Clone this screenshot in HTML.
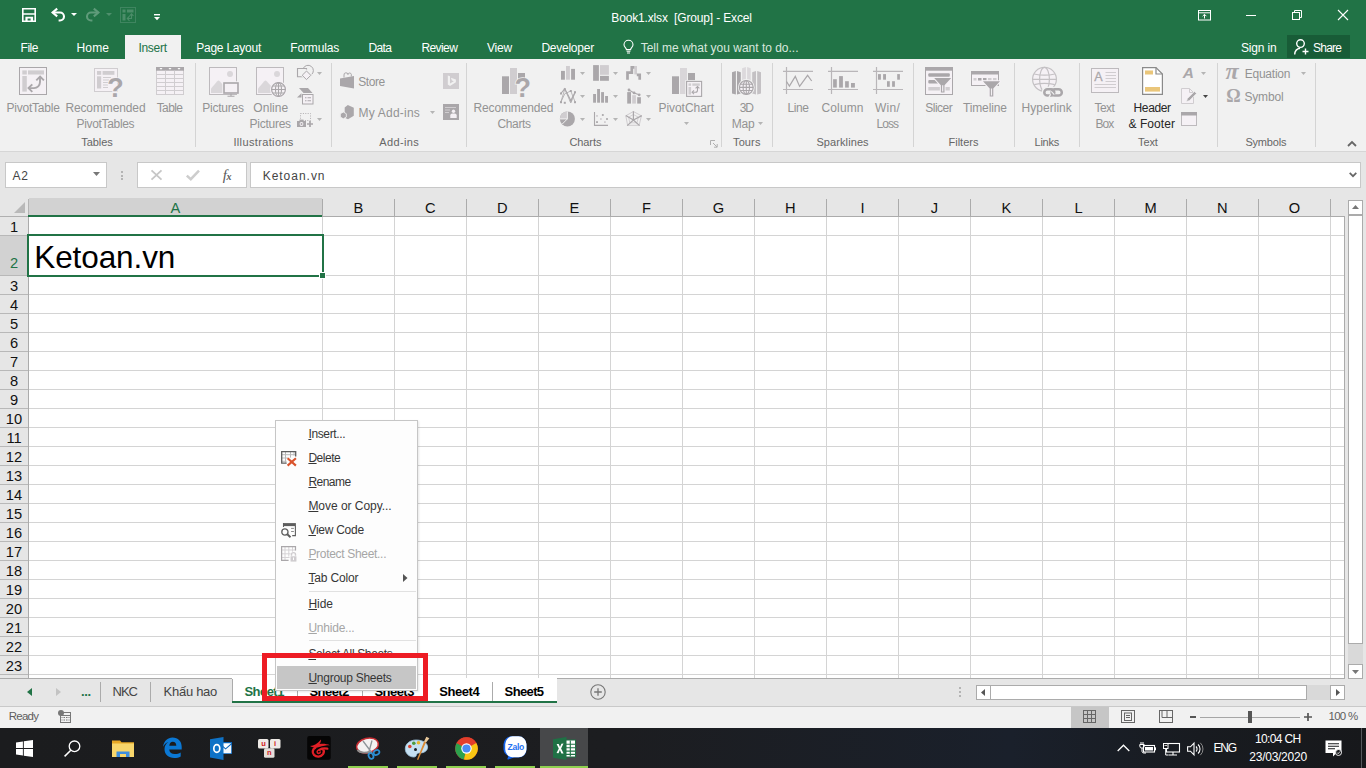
<!DOCTYPE html>
<html>
<head>
<meta charset="utf-8">
<title>Book1.xlsx [Group] - Excel</title>
<style>
*{box-sizing:border-box;margin:0;padding:0}
html,body{width:1366px;height:768px;overflow:hidden;background:#e6e6e6;font-family:"Liberation Sans",sans-serif;font-size:12px;color:#444}
#app{position:relative;width:1366px;height:768px;overflow:hidden}
.a{position:absolute}
.tx{position:absolute;white-space:nowrap;line-height:1}
svg{position:absolute;overflow:visible}
u{text-decoration:underline;text-underline-offset:1px}
</style>
</head>
<body>
<div id="app">
<div class="a" style="left:0;top:0;width:1366px;height:59px;background:#217346"></div>
<div class="a" style="left:0;top:59px;width:1366px;height:92px;background:#f1f1f1"></div>
<div class="a" style="left:0;top:151px;width:1366px;height:1px;background:#d6d6d6"></div>
<div class="a" style="left:125px;top:35px;width:56px;height:25px;background:#f1f1f1"></div>
<div class="a" style="left:1287px;top:35px;width:63px;height:23px;background:#185c37"></div>
<span class="tx" style="left:20.50px;top:41.84px;font-size:12px;color:#ffffff;letter-spacing:-0.450px;">File</span>
<span class="tx" style="left:76.40px;top:41.84px;font-size:12px;color:#ffffff;letter-spacing:0.200px;">Home</span>
<span class="tx" style="left:138.40px;top:41.84px;font-size:12px;color:#217346;letter-spacing:-0.280px;">Insert</span>
<span class="tx" style="left:196.20px;top:41.84px;font-size:12px;color:#ffffff;letter-spacing:-0.230px;">Page Layout</span>
<span class="tx" style="left:290.30px;top:41.84px;font-size:12px;color:#ffffff;letter-spacing:-0.143px;">Formulas</span>
<span class="tx" style="left:368.40px;top:41.84px;font-size:12px;color:#ffffff;letter-spacing:-0.633px;">Data</span>
<span class="tx" style="left:421.40px;top:41.84px;font-size:12px;color:#ffffff;letter-spacing:-0.580px;">Review</span>
<span class="tx" style="left:486.90px;top:41.84px;font-size:12px;color:#ffffff;letter-spacing:-0.200px;">View</span>
<span class="tx" style="left:541.40px;top:41.84px;font-size:12px;color:#ffffff;letter-spacing:-0.244px;">Developer</span>
<span class="tx" style="left:640.70px;top:41.84px;font-size:12px;color:#d9e8df;letter-spacing:-0.009px;">Tell me what you want to do...</span>
<span class="tx" style="left:1241.00px;top:41.84px;font-size:12px;color:#ffffff;letter-spacing:-0.175px;">Sign in</span>
<span class="tx" style="left:1313.00px;top:41.84px;font-size:12px;color:#ffffff;letter-spacing:-0.750px;">Share</span>
<span class="tx" style="left:611.30px;top:12.14px;font-size:12px;color:#ffffff;letter-spacing:-0.156px;white-space:pre;">Book1.xlsx  [Group] - Excel</span>
<svg style="left:22px;top:8px" width="14" height="14" viewBox="0 0 14 14"><path d="M0.800 0.800h12.400v12.400h-12.400z" fill="none" stroke="#fff" stroke-width="1.600"/><path d="M1 6h12" stroke="#fff" stroke-width="1.500"/><path d="M3.400 13.200V8.800h7.700v4.400h-2.500v-2.600H5.600v2.600z" fill="#fff"/></svg>
<svg style="left:50px;top:7px" width="16" height="15" viewBox="0 0 16 15"><path d="M7.200 1.600L2.600 5.500l4.600 3.900" fill="none" stroke="#fff" stroke-width="2.100"/><path d="M2.600 5.500h7.400a4 4 0 0 1 0 8H8.600" fill="none" stroke="#fff" stroke-width="2.100"/></svg>
<svg style="left:71px;top:13px" width="6" height="3" viewBox="0 0 6 3"><path d="M0 0h6L3 3z" fill="#fff"/></svg>
<svg style="left:85px;top:7px" width="16" height="15" viewBox="0 0 16 15"><path d="M8.800 1.600l4.600 3.900-4.600 3.900" fill="none" stroke="#5f9b7a" stroke-width="2.100"/><path d="M13.400 5.500H6a4 4 0 0 0 0 8h1.400" fill="none" stroke="#5f9b7a" stroke-width="2.100"/></svg>
<svg style="left:106px;top:13px" width="6" height="3" viewBox="0 0 6 3"><path d="M0 0h6L3 3z" fill="#4f8f6c"/></svg>
<svg style="left:120px;top:7px" width="16" height="16" viewBox="0 0 16 16"><rect x=".5" y=".5" width="15" height="15" fill="none" stroke="#3f8560"/><rect x="2.5" y="2.5" width="3" height="3" fill="#4b8d69"/><rect x="7" y="2.5" width="6.5" height="3" fill="#4b8d69"/><rect x="2.5" y="7" width="3" height="6.5" fill="#4b8d69"/><path d="M11.5 7v4.5H7.5M9.5 9.2l-2.2 2.3 2.2 2.3M9.6 8.8l1.9-2 1.9 2" fill="none" stroke="#4b8d69" stroke-width="1.1"/></svg>
<svg style="left:153.500px;top:14px" width="6" height="7" viewBox="0 0 6 7"><rect x="0" y="0" width="6" height="1.400" fill="#fff"/><path d="M0 3h6L3 6.200z" fill="#fff"/></svg>
<svg style="left:623px;top:40px" width="11" height="14" viewBox="0 0 11 14"><path d="M3.4 9.6C3.4 8 1 7.2 1 4.8a4.5 4.5 0 0 1 9 0c0 2.4-2.4 3.2-2.4 4.8z" fill="none" stroke="#fff" stroke-width="1.1"/><path d="M3.6 11.3h3.8M4 13h3" stroke="#fff" stroke-width="1.1"/></svg>
<svg style="left:1198px;top:10px" width="13" height="11" viewBox="0 0 13 11"><rect x=".5" y=".5" width="12" height="9.5" fill="none" stroke="#fff"/><path d="M.5 2.8h12" stroke="#fff"/><path d="M6.5 8.5V4.4M4.6 6.2l1.9-1.9 1.9 1.9" fill="none" stroke="#fff"/></svg>
<div class="a" style="left:1246px;top:15px;width:10px;height:1px;background:#fff"></div>
<svg style="left:1292px;top:10px" width="10" height="10" viewBox="0 0 10 10"><rect x=".5" y="2.5" width="7" height="7" fill="none" stroke="#fff"/><path d="M2.5 2.5v-2h7v7h-2" fill="none" stroke="#fff"/></svg>
<svg style="left:1338px;top:10px" width="10" height="10" viewBox="0 0 10 10"><path d="M0 0l10 10M10 0L0 10" stroke="#fff" stroke-width="1.1"/></svg>
<svg style="left:1294px;top:39px" width="15" height="16" viewBox="0 0 15 16"><circle cx="6.5" cy="4.6" r="3.8" fill="none" stroke="#fff" stroke-width="1.400"/><path d="M.7 15.5c.2-3.6 2.4-6 5.4-6.3" fill="none" stroke="#fff" stroke-width="1.400"/><path d="M11.5 9.5v6M8.5 12.5h6" stroke="#fff" stroke-width="1.400"/></svg>
<div class="a" style="left:195px;top:63px;width:1px;height:84px;background:#d4d4d4"></div>
<div class="a" style="left:331px;top:63px;width:1px;height:84px;background:#d4d4d4"></div>
<div class="a" style="left:466px;top:63px;width:1px;height:84px;background:#d4d4d4"></div>
<div class="a" style="left:721px;top:63px;width:1px;height:84px;background:#d4d4d4"></div>
<div class="a" style="left:772px;top:63px;width:1px;height:84px;background:#d4d4d4"></div>
<div class="a" style="left:913px;top:63px;width:1px;height:84px;background:#d4d4d4"></div>
<div class="a" style="left:1014px;top:63px;width:1px;height:84px;background:#d4d4d4"></div>
<div class="a" style="left:1079px;top:63px;width:1px;height:84px;background:#d4d4d4"></div>
<div class="a" style="left:1217px;top:63px;width:1px;height:84px;background:#d4d4d4"></div>
<div class="a" style="left:1315px;top:63px;width:1px;height:84px;background:#d4d4d4"></div>
<span class="tx" style="left:6.60px;top:101.84px;font-size:12px;color:#939393;letter-spacing:-0.233px;">PivotTable</span>
<span class="tx" style="left:65.40px;top:101.84px;font-size:12px;color:#939393;letter-spacing:-0.120px;">Recommended</span>
<span class="tx" style="left:76.60px;top:117.84px;font-size:12px;color:#939393;letter-spacing:-0.340px;">PivotTables</span>
<span class="tx" style="left:156.70px;top:101.84px;font-size:12px;color:#939393;letter-spacing:-0.612px;">Table</span>
<span class="tx" style="left:202.30px;top:101.84px;font-size:12px;color:#939393;letter-spacing:-0.250px;">Pictures</span>
<span class="tx" style="left:253.30px;top:101.84px;font-size:12px;color:#939393;letter-spacing:0.050px;">Online</span>
<span class="tx" style="left:249.50px;top:117.84px;font-size:12px;color:#939393;letter-spacing:-0.250px;">Pictures</span>
<span class="tx" style="left:358.30px;top:75.84px;font-size:12px;color:#939393;letter-spacing:-0.463px;">Store</span>
<span class="tx" style="left:358.50px;top:106.84px;font-size:12px;color:#939393;letter-spacing:0.217px;">My Add-ins</span>
<span class="tx" style="left:473.50px;top:101.84px;font-size:12px;color:#939393;letter-spacing:-0.140px;">Recommended</span>
<span class="tx" style="left:497.50px;top:117.84px;font-size:12px;color:#939393;letter-spacing:-0.370px;">Charts</span>
<span class="tx" style="left:658.50px;top:101.84px;font-size:12px;color:#939393;letter-spacing:-0.056px;">PivotChart</span>
<span class="tx" style="left:739.70px;top:101.84px;font-size:12px;color:#939393;letter-spacing:-1.200px;">3D</span>
<span class="tx" style="left:731.70px;top:117.84px;font-size:12px;color:#939393;letter-spacing:-0.125px;">Map</span>
<span class="tx" style="left:787.60px;top:101.84px;font-size:12px;color:#939393;letter-spacing:-0.450px;">Line</span>
<span class="tx" style="left:821.50px;top:101.84px;font-size:12px;color:#939393;letter-spacing:0.130px;">Column</span>
<span class="tx" style="left:875.00px;top:101.84px;font-size:12px;color:#939393;letter-spacing:0.250px;">Win/</span>
<span class="tx" style="left:876.60px;top:117.84px;font-size:12px;color:#939393;letter-spacing:-1.017px;">Loss</span>
<span class="tx" style="left:925.20px;top:101.84px;font-size:12px;color:#939393;letter-spacing:-0.480px;">Slicer</span>
<span class="tx" style="left:963.00px;top:101.84px;font-size:12px;color:#939393;letter-spacing:-0.143px;">Timeline</span>
<span class="tx" style="left:1021.60px;top:101.84px;font-size:12px;color:#939393;letter-spacing:0.019px;">Hyperlink</span>
<span class="tx" style="left:1094.50px;top:101.84px;font-size:12px;color:#939393;letter-spacing:-0.567px;">Text</span>
<span class="tx" style="left:1095.50px;top:117.84px;font-size:12px;color:#939393;letter-spacing:-1.025px;">Box</span>
<span class="tx" style="left:1133.60px;top:101.84px;font-size:12px;color:#262626;letter-spacing:-0.390px;">Header</span>
<span class="tx" style="left:1128.40px;top:117.84px;font-size:12px;color:#262626;letter-spacing:0.086px;">&amp; Footer</span>
<span class="tx" style="left:1244.70px;top:67.84px;font-size:12px;color:#939393;letter-spacing:-0.229px;">Equation</span>
<span class="tx" style="left:1244.40px;top:90.84px;font-size:12px;color:#939393;letter-spacing:-0.140px;">Symbol</span>
<span class="tx" style="left:81.30px;top:137.29px;font-size:11px;color:#666;letter-spacing:-0.070px;">Tables</span>
<span class="tx" style="left:233.40px;top:137.29px;font-size:11px;color:#666;letter-spacing:0.362px;">Illustrations</span>
<span class="tx" style="left:379.30px;top:137.29px;font-size:11px;color:#666;letter-spacing:0.342px;">Add-ins</span>
<span class="tx" style="left:569.40px;top:137.29px;font-size:11px;color:#666;letter-spacing:-0.080px;">Charts</span>
<span class="tx" style="left:733.00px;top:137.29px;font-size:11px;color:#666;letter-spacing:0.125px;">Tours</span>
<span class="tx" style="left:816.40px;top:137.29px;font-size:11px;color:#666;letter-spacing:0.094px;">Sparklines</span>
<span class="tx" style="left:948.50px;top:137.29px;font-size:11px;color:#666;">Filters</span>
<span class="tx" style="left:1034.50px;top:137.29px;font-size:11px;color:#666;letter-spacing:-0.238px;">Links</span>
<span class="tx" style="left:1138.00px;top:137.29px;font-size:11px;color:#666;letter-spacing:-0.083px;">Text</span>
<span class="tx" style="left:1245.40px;top:137.29px;font-size:11px;color:#666;letter-spacing:-0.192px;">Symbols</span>
<svg style="left:317px;top:72px" width="5" height="3" viewBox="0 0 5 3"><path d="M0 0h5L2.5 3z" fill="#b5b5b5"/></svg>
<svg style="left:317px;top:118px" width="5" height="3" viewBox="0 0 5 3"><path d="M0 0h5L2.5 3z" fill="#b5b5b5"/></svg>
<svg style="left:430px;top:110.8px" width="5" height="3" viewBox="0 0 5 3"><path d="M0 0h5L2.5 3z" fill="#b5b5b5"/></svg>
<svg style="left:580px;top:72px" width="5" height="3" viewBox="0 0 5 3"><path d="M0 0h5L2.5 3z" fill="#b5b5b5"/></svg>
<svg style="left:613px;top:72px" width="5" height="3" viewBox="0 0 5 3"><path d="M0 0h5L2.5 3z" fill="#b5b5b5"/></svg>
<svg style="left:646px;top:72px" width="5" height="3" viewBox="0 0 5 3"><path d="M0 0h5L2.5 3z" fill="#b5b5b5"/></svg>
<svg style="left:580px;top:95px" width="5" height="3" viewBox="0 0 5 3"><path d="M0 0h5L2.5 3z" fill="#b5b5b5"/></svg>
<svg style="left:613px;top:95px" width="5" height="3" viewBox="0 0 5 3"><path d="M0 0h5L2.5 3z" fill="#b5b5b5"/></svg>
<svg style="left:646px;top:95px" width="5" height="3" viewBox="0 0 5 3"><path d="M0 0h5L2.5 3z" fill="#b5b5b5"/></svg>
<svg style="left:580px;top:118px" width="5" height="3" viewBox="0 0 5 3"><path d="M0 0h5L2.5 3z" fill="#b5b5b5"/></svg>
<svg style="left:613px;top:118px" width="5" height="3" viewBox="0 0 5 3"><path d="M0 0h5L2.5 3z" fill="#b5b5b5"/></svg>
<svg style="left:646px;top:118px" width="5" height="3" viewBox="0 0 5 3"><path d="M0 0h5L2.5 3z" fill="#b5b5b5"/></svg>
<svg style="left:684px;top:122px" width="5" height="3" viewBox="0 0 5 3"><path d="M0 0h5L2.5 3z" fill="#b5b5b5"/></svg>
<svg style="left:758px;top:122px" width="5" height="3" viewBox="0 0 5 3"><path d="M0 0h5L2.5 3z" fill="#b5b5b5"/></svg>
<svg style="left:1201px;top:72px" width="5" height="3" viewBox="0 0 5 3"><path d="M0 0h5L2.5 3z" fill="#b5b5b5"/></svg>
<svg style="left:1203px;top:95px" width="5" height="3" viewBox="0 0 5 3"><path d="M0 0h5L2.5 3z" fill="#444"/></svg>
<svg style="left:1300.5px;top:72px" width="5" height="3" viewBox="0 0 5 3"><path d="M0 0h5L2.5 3z" fill="#b5b5b5"/></svg>
<svg style="left:710px;top:140px" width="8" height="8" viewBox="0 0 8 8"><path d="M.5 5V.5H5" fill="none" stroke="#b0b0b0"/><path d="M3 3l4 4M7.2 4v3.2H4" fill="none" stroke="#b0b0b0"/></svg>
<svg style="left:1347px;top:140px" width="10" height="7" viewBox="0 0 10 7"><path d="M1 6l4-4 4 4" fill="none" stroke="#666" stroke-width="1.8"/></svg>
<svg style="left:19px;top:67px" width="28" height="28" viewBox="0 0 28 28"><rect x=".5" y=".5" width="27" height="27" fill="#f5f1f5" stroke="#aaa7aa"/><rect x="3.3" y="3.4" width="4.5" height="4.1" fill="#d0cdd0"/><rect x="9" y="3.4" width="16" height="4.1" fill="#d0cdd0"/><rect x="3.3" y="9" width="4.5" height="15.6" fill="#d0cdd0"/><path d="M9.800 21.100h5.200a6 6 0 0 0 6-6V10" fill="none" stroke="#aaa7aa" stroke-width="1.900"/><path d="M13.300 17.300l-3.800 3.800 3.800 3.800" fill="none" stroke="#aaa7aa" stroke-width="1.900"/><path d="M17.300 13.400l3.800-3.800 3.800 3.800" fill="none" stroke="#aaa7aa" stroke-width="1.900"/></svg>
<svg style="left:94px;top:68px" width="28" height="29" viewBox="0 0 28 29"><rect x=".5" y=".5" width="23" height="23" fill="#f5f1f5" stroke="#d0cdd0"/><rect x="3" y="3" width="4.200" height="3.800" fill="#d0cdd0"/><rect x="8.600" y="3" width="11.800" height="3.800" fill="#d0cdd0"/><rect x="3" y="8.300" width="4.200" height="12.200" fill="#d0cdd0"/><path d="M9 9.500h8M9 12h6M9 14.500h6M9 17h5M9 19.500h5" stroke="#d0cdd0" stroke-width="1"/><text x="13.200" y="28.700" font-family="Liberation Sans, sans-serif" font-weight="bold" font-size="27" fill="#aaa7aa" stroke="#f5f1f5" stroke-width="1.600" paint-order="stroke">?</text></svg>
<svg style="left:156px;top:67px" width="28" height="28" viewBox="0 0 28 28"><rect x=".5" y=".5" width="27" height="27" fill="#f5f1f5" stroke="#d0cdd0"/><rect x="0" y="0" width="28" height="3.700" fill="#aaa7aa"/><path d="M0 7.5h28" stroke="#d0cdd0" stroke-width="1"/><path d="M0 11.5h28" stroke="#d0cdd0" stroke-width="1"/><path d="M0 15.5h28" stroke="#d0cdd0" stroke-width="1"/><path d="M0 19.5h28" stroke="#d0cdd0" stroke-width="1"/><path d="M0 23.5h28" stroke="#d0cdd0" stroke-width="1"/><path d="M9.5 3.700v24" stroke="#d0cdd0" stroke-width="1"/><path d="M18.5 3.700v24" stroke="#d0cdd0" stroke-width="1"/><path d="M3.5 1h3l-1.500 1.800z" fill="#fff"/><path d="M12.5 1h3l-1.500 1.800z" fill="#fff"/><path d="M21.5 1h3l-1.500 1.800z" fill="#fff"/></svg>
<svg style="left:209px;top:67px" width="31" height="31" viewBox="0 0 31 31"><rect x=".5" y=".5" width="27" height="27" fill="#f5f1f5" stroke="#bdbabd"/><circle cx="21" cy="7" r="3" fill="#dad7da"/><path d="M2 26V21.500l6.300-7.300q1.200-1.200 2.400 0l6.800 7.300V26z" fill="#dad7da"/><rect x="13.300" y="14.300" width="17" height="12.700" fill="#f5f1f5"/><rect x="15" y="16" width="14" height="10" fill="#f5f1f5" stroke="#aaa7aa" stroke-width="1.600"/><path d="M22 26.800v2M18.500 29.300h7" stroke="#aaa7aa" stroke-width="1.100"/></svg>
<svg style="left:256px;top:67px" width="31" height="31" viewBox="0 0 31 31"><rect x=".5" y=".5" width="27" height="27" fill="#f5f1f5" stroke="#bdbabd"/><circle cx="21" cy="7" r="3" fill="#dad7da"/><path d="M2 26V21.500l6.300-7.300q1.200-1.200 2.400 0l6.800 7.300V26z" fill="#dad7da"/><circle cx="22.500" cy="22.500" r="7.500" fill="#f5f1f5" stroke="#f5f1f5" stroke-width="2"/><circle cx="22.500" cy="22.500" r="6.900" fill="#f5f1f5" stroke="#aaa7aa" stroke-width="1.200"/><ellipse cx="22.500" cy="22.500" rx="3" ry="6.900" fill="none" stroke="#aaa7aa" stroke-width="1.100"/><path d="M15.600 22.500h13.800M16.600 19h11.800M16.600 26h11.800M22.500 15.600v13.800" stroke="#aaa7aa" stroke-width="1.100"/></svg>
<svg style="left:297px;top:65px" width="17" height="16" viewBox="0 0 17 16"><path d="M6.200 3.500A5.300 5.300 0 1 1 14.300 9.800" fill="none" stroke="#aaa7aa" stroke-width="1"/><path d="M6.500 11.700H.5V3.500H9.500V6" fill="none" stroke="#aaa7aa" stroke-width="1.100"/><path d="M9.500 6l4.300 4.300-4.300 4.300-4.300-4.300z" fill="#f1f1f1" stroke="#f1f1f1" stroke-width="2.400"/><path d="M9.500 6l4.300 4.300-4.300 4.300-4.300-4.300z" fill="#f5f1f5" stroke="#aaa7aa" stroke-width="1"/></svg>
<svg style="left:297px;top:88px" width="17" height="17" viewBox="0 0 17 17"><path d="M2 0h9l4.500 5H6.500z" fill="#aaa7aa"/><path d="M0 9.500l4.500-4.300V9.500z" fill="#aaa7aa"/><rect x="5.500" y="6.500" width="10.500" height="9.500" fill="#f5f1f5" stroke="#aaa7aa"/><path d="M8 9.800h1.500M10.500 9.800h3.500M8 12.800h1.500M10.500 12.800h3.500" stroke="#aaa7aa" stroke-width="1.100"/></svg>
<svg style="left:297px;top:113px" width="17" height="14" viewBox="0 0 17 14"><rect x="3.500" y=".5" width="10" height="7" fill="none" stroke="#aaa7aa" stroke-width=".9" stroke-dasharray="1 1.400"/><rect x="0" y="8" width="9" height="6" fill="#aaa7aa"/><rect x="2.500" y="6.600" width="4" height="2" fill="#aaa7aa"/><circle cx="4.500" cy="11" r="1.900" fill="#f5f1f5"/><circle cx="4.500" cy="11" r="1" fill="#aaa7aa"/><path d="M13 8v6M10 11h6" stroke="#aaa7aa" stroke-width="1.700"/></svg>
<svg style="left:340px;top:72px" width="15" height="17" viewBox="0 0 15 17"><path d="M0 6.500l14-2.500V16.500L0 14z" fill="#aaa7aa"/><path d="M4 5.500V3a2 2 0 0 1 4-.4V2.300a1.700 1.700 0 0 1 3.300 0V4.500" fill="none" stroke="#aaa7aa" stroke-width="1"/></svg>
<svg style="left:340px;top:105px" width="15" height="15" viewBox="0 0 15 15"><path d="M7.800 0l6 2.700v8.100L8 14.200l-3.300-1.500V2.500z" fill="#aaa7aa"/><path d="M3.300 7l3 1.700v3.400l-3 1.700-3-1.700V8.700z" fill="#aaa7aa" stroke="#f1f1f1" stroke-width=".9"/></svg>
<svg style="left:443px;top:73px" width="16" height="16" viewBox="0 0 16 16"><rect width="16" height="16" fill="#d0cdd0"/><path d="M4.800 2.500l2.200.8v7.200l3.800-2.200-1.900-.9-1-2.600 5 1.800v2.600L7 12.900l-2.200-1.300z" fill="#f1f1f1"/></svg>
<svg style="left:443px;top:104px" width="16" height="16" viewBox="0 0 16 16"><rect width="16" height="16" fill="#aaa7aa"/><path d="M2 3.500h11M2 6h5M2 8.500h4" stroke="#d0cdd0" stroke-width="1.100"/><circle cx="10.500" cy="7.200" r="1.700" fill="#f5f1f5"/><path d="M7.300 14v-2.500a2 2 0 0 1 2-2h2.400a2 2 0 0 1 2 2V14z" fill="#f5f1f5"/></svg>
<svg style="left:502px;top:68px" width="28" height="29" viewBox="0 0 28 29"><rect x="0" y="8.300" width="7" height="17.700" fill="#aaa7aa"/><rect x="8" y="0" width="7" height="26" fill="#d0cdd0"/><rect x="16" y="5" width="7" height="6" fill="#aaa7aa"/><text x="12.600" y="28.700" font-family="Liberation Sans, sans-serif" font-weight="bold" font-size="27" fill="#aaa7aa" stroke="#f1f1f1" stroke-width="1.600" paint-order="stroke">?</text></svg>
<svg style="left:560px;top:65px" width="16" height="16" viewBox="0 0 16 16"><rect x="1" y="5.900" width="3.900" height="8.800" fill="#aaa7aa"/><rect x="6" y="1" width="3.900" height="13.700" fill="#d0cdd0"/><rect x="11.100" y="3.900" width="3.900" height="10.800" fill="#aaa7aa"/></svg>
<svg style="left:593px;top:65px" width="16" height="16" viewBox="0 0 16 16"><rect x=".1" y=".1" width="5.800" height="15.700" fill="#aaa7aa"/><rect x="7" y=".1" width="8.900" height="9.700" fill="#d0cdd0"/><rect x="7" y="10.900" width="8.900" height="4.900" fill="#aaa7aa"/></svg>
<svg style="left:626px;top:65px" width="16" height="16" viewBox="0 0 16 16"><path d="M1.500 14.800V7.600H5.800V2.400H8.800" fill="none" stroke="#aaa7aa" stroke-width="2.700"/><rect x="8.300" y="1" width="2.700" height="8.400" fill="#d0cdd0"/><path d="M10.800 9.800h2.900v5" fill="none" stroke="#aaa7aa" stroke-width="2.700"/></svg>
<svg style="left:560px;top:88px" width="16" height="16" viewBox="0 0 16 16"><path d="M.8 5.500L4.800 .8l6 11.700 4.400-8.500" fill="none" stroke="#aaa7aa" stroke-width="1.100"/><path d="M.8 14.200L4.800 1l6 14 4.400-10.500" fill="none" stroke="#aaa7aa" stroke-width="1" opacity=".8"/><path d="M.8 14.200l4-8.500L10.800 3l4.400 11.200" fill="none" stroke="#aaa7aa" stroke-width="1" opacity=".8"/><rect x="0" y="4.5" width="2" height="2" fill="#aaa7aa"/><rect x="3.8" y="0.19999999999999996" width="2" height="2" fill="#aaa7aa"/><rect x="9.8" y="2" width="2" height="2" fill="#aaa7aa"/><rect x="14" y="3.2" width="2" height="2" fill="#aaa7aa"/><rect x="0" y="13.2" width="2" height="2" fill="#aaa7aa"/><rect x="3.8" y="13.8" width="2" height="2" fill="#aaa7aa"/><rect x="9.8" y="11.5" width="2" height="2" fill="#aaa7aa"/><rect x="14" y="13.2" width="2" height="2" fill="#aaa7aa"/></svg>
<svg style="left:593px;top:88px" width="16" height="16" viewBox="0 0 16 16"><rect x=".1" y="6" width="2.900" height="8.700" fill="#aaa7aa"/><rect x="4.100" y="1" width="2.900" height="13.700" fill="#aaa7aa"/><rect x="8.100" y="4.100" width="2.900" height="10.600" fill="#aaa7aa"/><rect x="12.100" y="8" width="2.900" height="6.700" fill="#aaa7aa"/></svg>
<svg style="left:626px;top:88px" width="16" height="16" viewBox="0 0 16 16"><rect x="1.200" y="4.100" width="3.800" height="11.500" fill="#aaa7aa"/><rect x="6.200" y="7.200" width="3.700" height="8.400" fill="#d0cdd0"/><rect x="11.200" y="9.200" width="3.700" height="6.400" fill="#aaa7aa"/><path d="M3 2l5.100 2.900 5.100 1.900" fill="none" stroke="#aaa7aa" stroke-width="1.100"/><circle cx="3" cy="2" r="1.400" fill="#aaa7aa"/><circle cx="8.100" cy="4.900" r="1.400" fill="#aaa7aa"/><circle cx="13.200" cy="6.800" r="1.400" fill="#aaa7aa"/></svg>
<svg style="left:560px;top:111px" width="16" height="16" viewBox="0 0 16 16"><circle cx="7.400" cy="7.900" r="7.500" fill="#aaa7aa"/><path d="M7.400 7.900V.4A7.500 7.500 0 0 0 -.1 7.900z" fill="#d0cdd0"/><path d="M7.400 .4V7.900H-.1M7.400 7.900l-5.300 5.300" fill="none" stroke="#f1f1f1" stroke-width="1"/></svg>
<svg style="left:593px;top:111px" width="16" height="16" viewBox="0 0 16 16"><path d="M1.500 1v13.400H15" fill="none" stroke="#aaa7aa" stroke-width="1.100"/><rect x="8.9" y="3.1" width="1.800" height="1.800" fill="#aaa7aa"/><rect x="13.1" y="7.1" width="1.800" height="1.800" fill="#aaa7aa"/><rect x="3.1" y="10.2" width="1.800" height="1.800" fill="#aaa7aa"/><rect x="3.1" y="4.0" width="1.800" height="1.800" fill="#d0cdd0"/><rect x="7.0" y="7.1" width="1.800" height="1.800" fill="#d0cdd0"/><rect x="11.0" y="10.2" width="1.800" height="1.800" fill="#d0cdd0"/></svg>
<svg style="left:626px;top:111px" width="16" height="16" viewBox="0 0 16 16"><path d="M7.400 .5l8 4.300-2.200 9.500H1.600L-.2 4.800z" fill="none" stroke="#d0cdd0" stroke-width="1"/><path d="M7.400 3.500l5 2.700-1.400 5.600H3.800L2.600 6.200z" fill="none" stroke="#d0cdd0" stroke-width=".9"/><path d="M7.400 .2v9M15.800 4.600L7.400 9M13.600 14.600L7.400 9M1.200 14.600L7.400 9M-.2 4.600L7.400 9" stroke="#aaa7aa" stroke-width="1.200"/></svg>
<svg style="left:672px;top:68px" width="31" height="29" viewBox="0 0 31 29"><rect x="0" y="8.300" width="7" height="17.700" fill="#aaa7aa"/><rect x="8" y="0" width="7" height="26" fill="#d9d6d9"/><rect x="16" y="5" width="7" height="8" fill="#aaa7aa"/><rect x="13.300" y="12.100" width="17.400" height="17.400" fill="#f1f1f1"/><rect x="14.600" y="13.400" width="15" height="15" fill="#f5f1f5" stroke="#aaa7aa" stroke-width="1.100"/><rect x="16.500" y="15.400" width="2.600" height="2.400" fill="#d0cdd0"/><rect x="20.300" y="15.400" width="7.500" height="2.400" fill="#d0cdd0"/><rect x="16.500" y="19" width="2.600" height="7.600" fill="#d0cdd0"/><path d="M20.300 24.300h3.200a2 2 0 0 0 2-2v-3.600" fill="none" stroke="#aaa7aa" stroke-width="1.100"/><path d="M22 22.400l-1.900 1.900 1.900 1.900M23.600 20.400l1.900-1.900 1.900 1.900" fill="none" stroke="#aaa7aa" stroke-width="1.100"/></svg>
<svg style="left:732px;top:67px" width="29" height="28" viewBox="0 0 29 28"><path d="M0 5.300l3.900-1.400v23.700L0 26.600z" fill="#aaa7aa"/><path d="M5 3.900l3.800 1.400v21.300L5 27.600z" fill="#aaa7aa"/><path d="M10.100 1.200l3.800-1.100v27h-3.800z" fill="#dcd9dc"/><path d="M15.100 .1l3.600 1.100v25.900h-3.600z" fill="#dcd9dc"/><path d="M20.200 5.300l3.800-1.400v23.700l-3.800-1z" fill="#c4c1c4"/><path d="M25.200 3.900L29 5.300v21.300l-3.800 1z" fill="#c4c1c4"/><circle cx="14.300" cy="20.400" r="8.300" fill="#f1f1f1"/><circle cx="14.300" cy="20.400" r="6.900" fill="#f5f1f5" stroke="#aaa7aa" stroke-width="1.200"/><ellipse cx="14.300" cy="20.400" rx="3.200" ry="6.900" fill="none" stroke="#aaa7aa" stroke-width="1.100"/><path d="M7.400 20.400h13.800M8.200 17.300h12.200M8.200 23.500h12.200M14.300 13.500v13.800" stroke="#aaa7aa" stroke-width="1.100"/></svg>
<svg style="left:783px;top:67px" width="30" height="27" viewBox="0 0 30 27"><path d="M0 4.400h30M0 22.500h30M3.500 0v27" stroke="#b9b6b9" stroke-width="1.200"/><path d="M3.500 14.500l2.900 4.600 5.900-9.700 4.300 10 8-11.100 4.100 5.700" fill="none" stroke="#aaa7aa" stroke-width="1.200"/></svg>
<svg style="left:828px;top:67px" width="30" height="27" viewBox="0 0 30 27"><path d="M0 4.400h30M0 22.500h30M3.500 0v27" stroke="#b9b6b9" stroke-width="1.200"/><rect x="5.100" y="12.200" width="3.700" height="8.400" fill="#aaa7aa"/><rect x="11.100" y="9.100" width="3.800" height="11.500" fill="#aaa7aa"/><rect x="17.100" y="14.200" width="3.700" height="6.400" fill="#aaa7aa"/><rect x="23" y="16" width="3.900" height="4.600" fill="#aaa7aa"/></svg>
<svg style="left:873px;top:67px" width="30" height="27" viewBox="0 0 30 27"><path d="M0 4.400h30M0 22.500h30M3.500 0v27" stroke="#b9b6b9" stroke-width="1.200"/><rect x="5" y="7.100" width="2.900" height="5.600" fill="#aaa7aa"/><rect x="10.100" y="7.100" width="2.900" height="5.600" fill="#aaa7aa"/><rect x="14" y="14.200" width="2.800" height="5.600" fill="#aaa7aa"/><rect x="19.100" y="14.200" width="2.800" height="5.600" fill="#aaa7aa"/><rect x="24.200" y="7.100" width="2.700" height="5.600" fill="#aaa7aa"/></svg>
<svg style="left:925px;top:67px" width="28" height="28" viewBox="0 0 28 28"><rect x=".5" y=".5" width="27" height="27" fill="#f5f1f5" stroke="#aaa7aa"/><rect x="0" y="0" width="28" height="3.700" fill="#aaa7aa"/><rect x="3.300" y="6.300" width="21.500" height="3.500" rx="1" fill="#aaa7aa"/><rect x="3.300" y="13" width="10" height="3.500" rx="1" fill="#aaa7aa"/><rect x="3.300" y="20" width="21.500" height="3.500" fill="#d0cdd0"/><path d="M9.2 11h17l-6.700 7.300v7.3h-3.600V18.3z" fill="#f5f1f5" stroke="#f5f1f5" stroke-width="2" stroke-linejoin="round"/><path d="M9.2 11h17l-6.700 7.300v7.3h-3.600V18.3z" fill="#aaa7aa"/><path d="M17.1 18.3v6.1h1.200v-6.1z" fill="#f5f1f5"/></svg>
<svg style="left:971px;top:71px" width="29" height="26" viewBox="0 0 29 26"><rect x=".5" y=".5" width="27" height="14" fill="#f5f1f5" stroke="#aaa7aa"/><rect x="0" y="0" width="28" height="3.500" fill="#aaa7aa"/><rect x="2.500" y="7" width="3" height="2.500" fill="#d0cdd0"/><rect x="7" y="7" width="3.500" height="2.500" fill="#aaa7aa"/><rect x="12" y="7" width="3.500" height="2.500" fill="#aaa7aa"/><rect x="17" y="7" width="3.500" height="2.500" fill="#d0cdd0"/><rect x="22" y="7" width="3.500" height="2.500" fill="#d0cdd0"/><path d="M12 10.3h17l-6.700 7.300v8h-3.600V17.6z" fill="#f5f1f5" stroke="#f5f1f5" stroke-width="2" stroke-linejoin="round"/><path d="M12 10.3h17l-6.700 7.300v8h-3.600V17.6z" fill="#aaa7aa"/><path d="M19.9 17.6v6.8h1.200v-6.8z" fill="#f5f1f5"/></svg>
<svg style="left:1032px;top:67px" width="32" height="30" viewBox="0 0 32 30"><circle cx="12.500" cy="12.300" r="11.900" fill="#f5f1f5" stroke="#c4c1c4" stroke-width="1.200"/><ellipse cx="12.500" cy="12.300" rx="4.900" ry="11.900" fill="none" stroke="#c4c1c4" stroke-width="1.200"/><path d="M.6 12.300h23.800M2.200 7q10.300 2.400 20.600 0M2.200 17.600q10.300-2.400 20.600 0" fill="none" stroke="#c4c1c4" stroke-width="1.200"/><rect x="9.800" y="19.700" width="22.200" height="10.300" rx="5" fill="#f1f1f1"/><rect x="12.300" y="22.200" width="10" height="6.400" rx="3.200" fill="none" stroke="#aaa7aa" stroke-width="2.500"/><path d="M16.800 30.500l5.700-10" stroke="#f1f1f1" stroke-width="1.300"/><rect x="19.600" y="22.200" width="10.200" height="6.400" rx="3.200" fill="none" stroke="#aaa7aa" stroke-width="2.500"/><path d="M19.300 24.300l3 3.400" stroke="#f1f1f1" stroke-width="1.100"/></svg>
<svg style="left:1091px;top:68px" width="28" height="25" viewBox="0 0 28 25"><rect x=".5" y=".5" width="27" height="24" fill="#f5f1f5" stroke="#bdbabd"/><text x="3.300" y="12.800" font-family="Liberation Sans, sans-serif" font-size="12.500" fill="#aaa7aa" stroke="#aaa7aa" stroke-width=".3">A</text><path d="M14.500 4.500h10.500M14.500 7.500h10.500M14.500 10.500h10.500M14.500 13.500h10.500M3.500 16.500h21.500M3.500 19.500h21.500" stroke="#d0cdd0" stroke-width="1"/></svg>
<svg style="left:1142px;top:67px" width="21" height="28" viewBox="0 0 21 28"><path d="M.6 .6h13.400l6.400 6.400v20.400H.6z" fill="#fff" stroke="#8a8a8a" stroke-width="1.200"/><path d="M14 .6v6.400h6.400" fill="none" stroke="#8a8a8a" stroke-width="1.200"/><rect x="3" y="3.500" width="8" height="4" fill="#eac67a"/><rect x="3" y="20" width="15" height="4.600" fill="#eac67a"/></svg>
<span class="tx" style="left:1182.800px;top:65.200px;font-size:15.500px;font-weight:bold;font-style:italic;color:#aaa7aa">A</span>
<svg style="left:1181px;top:88px" width="17" height="16" viewBox="0 0 17 16"><path d="M.5 .5h8l4 4v11H.5z" fill="#f5f1f5" stroke="#d0cdd0"/><path d="M8.500 .5v4h4" fill="none" stroke="#d0cdd0"/><path d="M5.500 13.500l1-3 7-7 2 2-7 7z" fill="#aaa7aa" stroke="#f1f1f1" stroke-width=".6"/></svg>
<svg style="left:1181px;top:112px" width="16" height="14" viewBox="0 0 16 14"><rect x=".5" y=".5" width="15" height="13" fill="#f5f1f5" stroke="#bdbabd"/><rect x="0" y="0" width="16" height="3.500" fill="#aaa7aa"/></svg>
<span class="tx" style="left:1225.500px;top:58.500px;font-size:24px;font-family:'Liberation Serif','DejaVu Serif',serif;font-style:italic;font-weight:bold;color:#aaa7aa">π</span>
<span class="tx" style="left:1226.300px;top:86.800px;font-size:18px;font-family:'Liberation Serif','DejaVu Serif',serif;font-weight:bold;color:#aaa7aa">Ω</span>
<div class="a" style="left:5px;top:162px;width:102px;height:26px;background:#fff;border:1px solid #c8c8c8"></div>
<div class="a" style="left:137px;top:162px;width:110px;height:26px;background:#fff;border:1px solid #c8c8c8"></div>
<div class="a" style="left:250px;top:162px;width:1111px;height:26px;background:#fff;border:1px solid #c8c8c8"></div>
<span class="tx" style="left:12.50px;top:169.54px;font-size:12px;color:#444;letter-spacing:0.750px;">A2</span>
<span class="tx" style="left:262.70px;top:169.54px;font-size:12px;color:#444;letter-spacing:0.975px;">Ketoan.vn</span>
<svg style="left:93px;top:172px" width="7" height="4" viewBox="0 0 7 4"><path d="M0 0h7L3.500 4z" fill="#777"/></svg>
<div class="a" style="left:121px;top:171px;width:2px;height:2px;background:#b4b4b4"></div>
<div class="a" style="left:121px;top:174.5px;width:2px;height:2px;background:#b4b4b4"></div>
<div class="a" style="left:121px;top:178px;width:2px;height:2px;background:#b4b4b4"></div>
<svg style="left:150.500px;top:170px" width="11" height="10" viewBox="0 0 11 10"><path d="M.5 .3l10 9.400M10.500 .3l-10 9.400" stroke="#c6c6c6" stroke-width="1.800"/></svg>
<svg style="left:185.500px;top:170px" width="14" height="10" viewBox="0 0 14 10"><path d="M.8 5.600l4 3.600L13 .6" fill="none" stroke="#cdcdcd" stroke-width="2.500"/></svg>
<span class="tx" style="left:222.800px;top:167.600px;font-size:15px;font-family:'Liberation Serif',serif;font-style:italic;color:#5a5a5a">f<span style="font-size:10px;font-weight:bold;position:relative;left:-0.500px">x</span></span>
<svg style="left:1349px;top:172px" width="8" height="6" viewBox="0 0 8 6"><path d="M.7 .8l3.300 3.400L7.300 .8" fill="none" stroke="#666" stroke-width="1.700"/></svg>
<div class="a" style="left:29px;top:217px;width:1316px;height:461px;background:#fff"></div>
<div class="a" style="left:29px;top:198px;width:293px;height:17px;background:#d2d2d2"></div>
<div class="a" style="left:28px;top:215px;width:295px;height:2px;background:#217346"></div>
<div class="a" style="left:322px;top:216px;width:1023px;height:1px;background:#ababab"></div>
<div class="a" style="left:0px;top:216px;width:28px;height:1px;background:#b0b0b0"></div>
<div class="a" style="left:28px;top:199px;width:1px;height:16px;background:#b4b4b4"></div>
<div class="a" style="left:0px;top:236px;width:27px;height:39px;background:#d2d2d2"></div>
<div class="a" style="left:28px;top:217px;width:1px;height:461px;background:#ababab"></div>
<svg style="left:14px;top:202px" width="11" height="11" viewBox="0 0 11 11"><path d="M11 0v11H0z" fill="#b9b9b9"/></svg>
<span class="tx" style="left:170.50px;top:200.58px;font-size:14.67px;color:#217346;">A</span>
<span class="tx" style="left:353.62px;top:200.58px;font-size:14.67px;color:#111;">B</span>
<span class="tx" style="left:425.12px;top:200.58px;font-size:14.67px;color:#111;">C</span>
<span class="tx" style="left:497.12px;top:200.58px;font-size:14.67px;color:#111;">D</span>
<span class="tx" style="left:569.62px;top:200.58px;font-size:14.67px;color:#111;">E</span>
<span class="tx" style="left:642.00px;top:200.58px;font-size:14.67px;color:#111;">F</span>
<span class="tx" style="left:712.75px;top:200.58px;font-size:14.67px;color:#111;">G</span>
<span class="tx" style="left:785.12px;top:200.58px;font-size:14.67px;color:#111;">H</span>
<span class="tx" style="left:860.50px;top:200.58px;font-size:14.67px;color:#111;">I</span>
<span class="tx" style="left:930.75px;top:200.58px;font-size:14.67px;color:#111;">J</span>
<span class="tx" style="left:1001.62px;top:200.58px;font-size:14.67px;color:#111;">K</span>
<span class="tx" style="left:1074.38px;top:200.58px;font-size:14.67px;color:#111;">L</span>
<span class="tx" style="left:1144.38px;top:200.58px;font-size:14.67px;color:#111;">M</span>
<span class="tx" style="left:1217.12px;top:200.58px;font-size:14.67px;color:#111;">N</span>
<span class="tx" style="left:1288.75px;top:200.58px;font-size:14.67px;color:#111;">O</span>
<div class="a" style="left:322px;top:217px;width:1px;height:461px;background:#d4d4d4"></div>
<div class="a" style="left:322px;top:199px;width:1px;height:17px;background:#ababab"></div>
<div class="a" style="left:394px;top:217px;width:1px;height:461px;background:#d4d4d4"></div>
<div class="a" style="left:394px;top:199px;width:1px;height:17px;background:#ababab"></div>
<div class="a" style="left:466px;top:217px;width:1px;height:461px;background:#d4d4d4"></div>
<div class="a" style="left:466px;top:199px;width:1px;height:17px;background:#ababab"></div>
<div class="a" style="left:538px;top:217px;width:1px;height:461px;background:#d4d4d4"></div>
<div class="a" style="left:538px;top:199px;width:1px;height:17px;background:#ababab"></div>
<div class="a" style="left:610px;top:217px;width:1px;height:461px;background:#d4d4d4"></div>
<div class="a" style="left:610px;top:199px;width:1px;height:17px;background:#ababab"></div>
<div class="a" style="left:682px;top:217px;width:1px;height:461px;background:#d4d4d4"></div>
<div class="a" style="left:682px;top:199px;width:1px;height:17px;background:#ababab"></div>
<div class="a" style="left:754px;top:217px;width:1px;height:461px;background:#d4d4d4"></div>
<div class="a" style="left:754px;top:199px;width:1px;height:17px;background:#ababab"></div>
<div class="a" style="left:826px;top:217px;width:1px;height:461px;background:#d4d4d4"></div>
<div class="a" style="left:826px;top:199px;width:1px;height:17px;background:#ababab"></div>
<div class="a" style="left:898px;top:217px;width:1px;height:461px;background:#d4d4d4"></div>
<div class="a" style="left:898px;top:199px;width:1px;height:17px;background:#ababab"></div>
<div class="a" style="left:970px;top:217px;width:1px;height:461px;background:#d4d4d4"></div>
<div class="a" style="left:970px;top:199px;width:1px;height:17px;background:#ababab"></div>
<div class="a" style="left:1042px;top:217px;width:1px;height:461px;background:#d4d4d4"></div>
<div class="a" style="left:1042px;top:199px;width:1px;height:17px;background:#ababab"></div>
<div class="a" style="left:1114px;top:217px;width:1px;height:461px;background:#d4d4d4"></div>
<div class="a" style="left:1114px;top:199px;width:1px;height:17px;background:#ababab"></div>
<div class="a" style="left:1186px;top:217px;width:1px;height:461px;background:#d4d4d4"></div>
<div class="a" style="left:1186px;top:199px;width:1px;height:17px;background:#ababab"></div>
<div class="a" style="left:1258px;top:217px;width:1px;height:461px;background:#d4d4d4"></div>
<div class="a" style="left:1258px;top:199px;width:1px;height:17px;background:#ababab"></div>
<div class="a" style="left:1330px;top:217px;width:1px;height:461px;background:#d4d4d4"></div>
<div class="a" style="left:1330px;top:199px;width:1px;height:17px;background:#ababab"></div>
<div class="a" style="left:1344px;top:216px;width:1px;height:462px;background:#ababab"></div>
<div class="a" style="left:29px;top:235px;width:1315px;height:1px;background:#d4d4d4"></div>
<div class="a" style="left:0px;top:235px;width:28px;height:1px;background:#b8b8b8"></div>
<div class="a" style="left:29px;top:275px;width:1315px;height:1px;background:#d4d4d4"></div>
<div class="a" style="left:0px;top:275px;width:28px;height:1px;background:#b8b8b8"></div>
<div class="a" style="left:29px;top:294px;width:1315px;height:1px;background:#d4d4d4"></div>
<div class="a" style="left:0px;top:294px;width:28px;height:1px;background:#b8b8b8"></div>
<div class="a" style="left:29px;top:313px;width:1315px;height:1px;background:#d4d4d4"></div>
<div class="a" style="left:0px;top:313px;width:28px;height:1px;background:#b8b8b8"></div>
<div class="a" style="left:29px;top:332px;width:1315px;height:1px;background:#d4d4d4"></div>
<div class="a" style="left:0px;top:332px;width:28px;height:1px;background:#b8b8b8"></div>
<div class="a" style="left:29px;top:351px;width:1315px;height:1px;background:#d4d4d4"></div>
<div class="a" style="left:0px;top:351px;width:28px;height:1px;background:#b8b8b8"></div>
<div class="a" style="left:29px;top:370px;width:1315px;height:1px;background:#d4d4d4"></div>
<div class="a" style="left:0px;top:370px;width:28px;height:1px;background:#b8b8b8"></div>
<div class="a" style="left:29px;top:389px;width:1315px;height:1px;background:#d4d4d4"></div>
<div class="a" style="left:0px;top:389px;width:28px;height:1px;background:#b8b8b8"></div>
<div class="a" style="left:29px;top:408px;width:1315px;height:1px;background:#d4d4d4"></div>
<div class="a" style="left:0px;top:408px;width:28px;height:1px;background:#b8b8b8"></div>
<div class="a" style="left:29px;top:427px;width:1315px;height:1px;background:#d4d4d4"></div>
<div class="a" style="left:0px;top:427px;width:28px;height:1px;background:#b8b8b8"></div>
<div class="a" style="left:29px;top:446px;width:1315px;height:1px;background:#d4d4d4"></div>
<div class="a" style="left:0px;top:446px;width:28px;height:1px;background:#b8b8b8"></div>
<div class="a" style="left:29px;top:465px;width:1315px;height:1px;background:#d4d4d4"></div>
<div class="a" style="left:0px;top:465px;width:28px;height:1px;background:#b8b8b8"></div>
<div class="a" style="left:29px;top:484px;width:1315px;height:1px;background:#d4d4d4"></div>
<div class="a" style="left:0px;top:484px;width:28px;height:1px;background:#b8b8b8"></div>
<div class="a" style="left:29px;top:503px;width:1315px;height:1px;background:#d4d4d4"></div>
<div class="a" style="left:0px;top:503px;width:28px;height:1px;background:#b8b8b8"></div>
<div class="a" style="left:29px;top:522px;width:1315px;height:1px;background:#d4d4d4"></div>
<div class="a" style="left:0px;top:522px;width:28px;height:1px;background:#b8b8b8"></div>
<div class="a" style="left:29px;top:541px;width:1315px;height:1px;background:#d4d4d4"></div>
<div class="a" style="left:0px;top:541px;width:28px;height:1px;background:#b8b8b8"></div>
<div class="a" style="left:29px;top:560px;width:1315px;height:1px;background:#d4d4d4"></div>
<div class="a" style="left:0px;top:560px;width:28px;height:1px;background:#b8b8b8"></div>
<div class="a" style="left:29px;top:579px;width:1315px;height:1px;background:#d4d4d4"></div>
<div class="a" style="left:0px;top:579px;width:28px;height:1px;background:#b8b8b8"></div>
<div class="a" style="left:29px;top:598px;width:1315px;height:1px;background:#d4d4d4"></div>
<div class="a" style="left:0px;top:598px;width:28px;height:1px;background:#b8b8b8"></div>
<div class="a" style="left:29px;top:617px;width:1315px;height:1px;background:#d4d4d4"></div>
<div class="a" style="left:0px;top:617px;width:28px;height:1px;background:#b8b8b8"></div>
<div class="a" style="left:29px;top:636px;width:1315px;height:1px;background:#d4d4d4"></div>
<div class="a" style="left:0px;top:636px;width:28px;height:1px;background:#b8b8b8"></div>
<div class="a" style="left:29px;top:655px;width:1315px;height:1px;background:#d4d4d4"></div>
<div class="a" style="left:0px;top:655px;width:28px;height:1px;background:#b8b8b8"></div>
<div class="a" style="left:29px;top:674px;width:1315px;height:1px;background:#d4d4d4"></div>
<div class="a" style="left:0px;top:674px;width:28px;height:1px;background:#b8b8b8"></div>
<span class="tx" style="left:9.88px;top:219.78px;font-size:14.67px;color:#111;">1</span>
<span class="tx" style="left:9.88px;top:255.88px;font-size:14.67px;color:#217346;">2</span>
<span class="tx" style="left:9.88px;top:278.78px;font-size:14.67px;color:#111;">3</span>
<span class="tx" style="left:9.88px;top:297.78px;font-size:14.67px;color:#111;">4</span>
<span class="tx" style="left:9.88px;top:316.78px;font-size:14.67px;color:#111;">5</span>
<span class="tx" style="left:9.88px;top:335.78px;font-size:14.67px;color:#111;">6</span>
<span class="tx" style="left:9.88px;top:354.78px;font-size:14.67px;color:#111;">7</span>
<span class="tx" style="left:9.88px;top:373.78px;font-size:14.67px;color:#111;">8</span>
<span class="tx" style="left:9.88px;top:392.78px;font-size:14.67px;color:#111;">9</span>
<span class="tx" style="left:5.75px;top:411.78px;font-size:14.67px;color:#111;">10</span>
<span class="tx" style="left:6.38px;top:430.78px;font-size:14.67px;color:#111;">11</span>
<span class="tx" style="left:5.75px;top:449.78px;font-size:14.67px;color:#111;">12</span>
<span class="tx" style="left:5.75px;top:468.78px;font-size:14.67px;color:#111;">13</span>
<span class="tx" style="left:5.75px;top:487.78px;font-size:14.67px;color:#111;">14</span>
<span class="tx" style="left:5.75px;top:506.78px;font-size:14.67px;color:#111;">15</span>
<span class="tx" style="left:5.75px;top:525.78px;font-size:14.67px;color:#111;">16</span>
<span class="tx" style="left:5.75px;top:544.78px;font-size:14.67px;color:#111;">17</span>
<span class="tx" style="left:5.75px;top:563.78px;font-size:14.67px;color:#111;">18</span>
<span class="tx" style="left:5.75px;top:582.78px;font-size:14.67px;color:#111;">19</span>
<span class="tx" style="left:5.75px;top:601.78px;font-size:14.67px;color:#111;">20</span>
<span class="tx" style="left:5.75px;top:620.78px;font-size:14.67px;color:#111;">21</span>
<span class="tx" style="left:5.75px;top:639.78px;font-size:14.67px;color:#111;">22</span>
<span class="tx" style="left:5.75px;top:658.78px;font-size:14.67px;color:#111;">23</span>
<span class="tx" style="left:34.30px;top:241.64px;font-size:31.5px;color:#000;letter-spacing:-0.106px;">Ketoan.vn</span>
<div class="a" style="left:27px;top:234px;width:297px;height:43px;border:2px solid #217346"></div>
<div class="a" style="left:319px;top:272px;width:7px;height:7px;background:#217346;border:1px solid #fff"></div>
<div class="a" style="left:1348px;top:200px;width:15px;height:15px;background:#fff;border:1px solid #ababab"></div>
<svg style="left:1352px;top:205px" width="7" height="4" viewBox="0 0 7 4"><path d="M0 4h7L3.500 0z" fill="#777"/></svg>
<div class="a" style="left:1348px;top:215px;width:15px;height:429px;background:#fff;border:1px solid #ababab"></div>
<div class="a" style="left:1348px;top:644px;width:15px;height:20px;background:#d9d9d9"></div>
<div class="a" style="left:1348px;top:664px;width:15px;height:15px;background:#fff;border:1px solid #ababab"></div>
<svg style="left:1352px;top:670px" width="7" height="4" viewBox="0 0 7 4"><path d="M0 0h7L3.500 4z" fill="#777"/></svg>
<div class="a" style="left:0px;top:678px;width:1345px;height:1px;background:#ababab"></div>
<div class="a" style="left:0px;top:679px;width:1366px;height:27px;background:#e6e6e6"></div>
<div class="a" style="left:232px;top:678px;width:325px;height:23px;background:#fff"></div>
<div class="a" style="left:232px;top:679px;width:1px;height:22px;background:#ababab"></div>
<div class="a" style="left:232px;top:701px;width:325px;height:2px;background:#217346"></div>
<div class="a" style="left:297px;top:682px;width:1px;height:19px;background:#ababab"></div>
<div class="a" style="left:362px;top:682px;width:1px;height:19px;background:#ababab"></div>
<div class="a" style="left:427px;top:682px;width:1px;height:19px;background:#ababab"></div>
<div class="a" style="left:492px;top:682px;width:1px;height:19px;background:#ababab"></div>
<div class="a" style="left:100px;top:682px;width:1px;height:20px;background:#ababab"></div>
<div class="a" style="left:150px;top:682px;width:1px;height:20px;background:#ababab"></div>
<svg style="left:27px;top:688px" width="5" height="8" viewBox="0 0 5 8"><path d="M5 0v8L0 4z" fill="#217346"/></svg>
<svg style="left:56px;top:688px" width="5" height="8" viewBox="0 0 5 8"><path d="M0 0v8L5 4z" fill="#c3c3c3"/></svg>
<span class="tx" style="left:81.00px;top:685.00px;font-size:13px;color:#217346;letter-spacing:-0.375px;font-weight:bold;">...</span>
<span class="tx" style="left:112.50px;top:685.00px;font-size:13px;color:#444;letter-spacing:-1.000px;">NKC</span>
<span class="tx" style="left:163.60px;top:685.00px;font-size:13px;color:#444;letter-spacing:-0.279px;">Khấu hao</span>
<span class="tx" style="left:244.50px;top:685.00px;font-size:13px;color:#217346;letter-spacing:-0.550px;font-weight:bold;">Sheet1</span>
<span class="tx" style="left:309.50px;top:685.00px;font-size:13px;color:#000;letter-spacing:-0.550px;font-weight:bold;">Sheet2</span>
<span class="tx" style="left:374.50px;top:685.00px;font-size:13px;color:#000;letter-spacing:-0.550px;font-weight:bold;">Sheet3</span>
<span class="tx" style="left:439.30px;top:685.00px;font-size:13px;color:#000;letter-spacing:-0.450px;font-weight:bold;">Sheet4</span>
<span class="tx" style="left:504.60px;top:685.00px;font-size:13px;color:#000;letter-spacing:-0.630px;font-weight:bold;">Sheet5</span>
<svg style="left:590px;top:684px" width="16" height="16" viewBox="0 0 16 16"><circle cx="8" cy="8" r="7.200" fill="none" stroke="#777" stroke-width="1.100"/><path d="M8 4.200v7.600M4.200 8h7.600" stroke="#777" stroke-width="1.300"/></svg>
<div class="a" style="left:959px;top:687px;width:2px;height:2px;background:#b4b4b4"></div>
<div class="a" style="left:959px;top:691px;width:2px;height:2px;background:#b4b4b4"></div>
<div class="a" style="left:959px;top:695px;width:2px;height:2px;background:#b4b4b4"></div>
<div class="a" style="left:976px;top:685px;width:15px;height:15px;background:#fff;border:1px solid #ababab"></div>
<svg style="left:981px;top:689px" width="4" height="7" viewBox="0 0 4 7"><path d="M4 0v7L0 3.500z" fill="#555"/></svg>
<div class="a" style="left:990px;top:685px;width:317px;height:15px;background:#fff;border:1px solid #ababab"></div>
<div class="a" style="left:1307px;top:685px;width:23px;height:15px;background:#d9d9d9"></div>
<div class="a" style="left:1330px;top:685px;width:15px;height:15px;background:#fff;border:1px solid #ababab"></div>
<svg style="left:1336px;top:689px" width="4" height="7" viewBox="0 0 4 7"><path d="M0 0v7L4 3.500z" fill="#555"/></svg>
<div class="a" style="left:0px;top:706px;width:1366px;height:1px;background:#c9c9c9"></div>
<div class="a" style="left:0px;top:707px;width:1366px;height:21px;background:#f1f1f1"></div>
<span class="tx" style="left:8.80px;top:710.67px;font-size:11.5px;color:#5e5e5e;letter-spacing:-0.763px;">Ready</span>
<svg style="left:58px;top:710px" width="13" height="13" viewBox="0 0 13 13"><rect x="2.500" y="2.500" width="10" height="10" fill="none" stroke="#777"/><path d="M2.500 5.500h10M5.500 7.500h1.500M8 7.500h1.500M10.500 7.500h1M5.500 10h1.500M8 10h1.500M10.500 10h1M3.500 7.500h1M3.500 10h1" stroke="#777"/><circle cx="3" cy="3" r="3" fill="#777"/></svg>
<div class="a" style="left:1071px;top:707px;width:38px;height:21px;background:#c6c6c6"></div>
<svg style="left:1083px;top:710px" width="13" height="13" viewBox="0 0 13 13"><rect x=".5" y=".5" width="12" height="12" fill="none" stroke="#666"/><path d="M.5 4.500h12M.5 8.500h12M4.500 .5v12M8.500 .5v12" stroke="#666"/></svg>
<svg style="left:1121px;top:710px" width="14" height="13" viewBox="0 0 14 13"><rect x=".5" y=".5" width="13" height="12" fill="none" stroke="#666"/><rect x="3.500" y="3" width="7" height="7.500" fill="none" stroke="#666"/><path d="M5 5.500h4M5 7.500h4" stroke="#666"/></svg>
<svg style="left:1159px;top:710px" width="14" height="13" viewBox="0 0 14 13"><rect x=".5" y=".5" width="13" height="12" fill="none" stroke="#666"/><path d="M3 .5v7h11M8 .5v7" fill="none" stroke="#666"/></svg>
<div class="a" style="left:1190px;top:716px;width:6px;height:2px;background:#555"></div>
<div class="a" style="left:1200px;top:716.500px;width:100px;height:1px;background:#a6a6a6"></div>
<div class="a" style="left:1248px;top:710.500px;width:4px;height:12px;background:#555"></div>
<svg style="left:1304px;top:713px" width="8" height="8" viewBox="0 0 8 8"><path d="M4 0v8M0 4h8" stroke="#555" stroke-width="1.700"/></svg>
<span class="tx" style="left:1328.50px;top:710.67px;font-size:11.5px;color:#5e5e5e;letter-spacing:-0.750px;">100 %</span>
<div class="a" style="left:275px;top:420px;width:143px;height:271px;background:#fdfdfd;border:1px solid #c6c6c6;box-shadow:1px 1px 2px rgba(0,0,0,.10)"></div>
<div class="a" style="left:277px;top:666px;width:139px;height:23px;background:#c6c6c6"></div>
<span class="tx" style="left:308.40px;top:428.04px;font-size:12px;color:#363636;letter-spacing:-0.362px;"><u>I</u>nsert...</span>
<span class="tx" style="left:308.40px;top:452.04px;font-size:12px;color:#363636;letter-spacing:-0.470px;"><u>D</u>elete</span>
<span class="tx" style="left:308.40px;top:476.04px;font-size:12px;color:#363636;letter-spacing:-0.530px;"><u>R</u>ename</span>
<span class="tx" style="left:308.40px;top:500.04px;font-size:12px;color:#363636;letter-spacing:-0.039px;"><u>M</u>ove or Copy...</span>
<span class="tx" style="left:308.40px;top:524.04px;font-size:12px;color:#363636;letter-spacing:-0.269px;"><u>V</u>iew Code</span>
<span class="tx" style="left:308.40px;top:548.04px;font-size:12px;color:#a6a6a6;letter-spacing:-0.310px;"><u>P</u>rotect Sheet...</span>
<span class="tx" style="left:308.40px;top:572.04px;font-size:12px;color:#363636;letter-spacing:-0.162px;"><u>T</u>ab Color</span>
<span class="tx" style="left:308.40px;top:598.04px;font-size:12px;color:#363636;letter-spacing:-0.050px;"><u>H</u>ide</span>
<span class="tx" style="left:308.40px;top:622.04px;font-size:12px;color:#a6a6a6;letter-spacing:-0.225px;"><u>U</u>nhide...</span>
<span class="tx" style="left:308.40px;top:647.84px;font-size:12px;color:#363636;letter-spacing:-0.356px;"><u>S</u>elect All Sheets</span>
<span class="tx" style="left:308.40px;top:671.64px;font-size:12px;color:#363636;letter-spacing:-0.258px;"><u>U</u>ngroup Sheets</span>
<div class="a" style="left:309px;top:591px;width:107px;height:1px;background:#e1e1e1"></div>
<div class="a" style="left:309px;top:640px;width:107px;height:1px;background:#e1e1e1"></div>
<svg style="left:403px;top:574px" width="5" height="8" viewBox="0 0 5 8"><path d="M0 0v8L4.500 4z" fill="#555"/></svg>
<svg style="left:281px;top:451px" width="16" height="15" viewBox="0 0 16 15"><path d="M4.500 .6v11M9.500 .6v6M13 .6v4M.6 3.700h14M.6 7h8M.6 10.300h5" stroke="#b9b9b9" stroke-width="1"/><path d="M14.700 5.500V.700H.700V12.200h5" fill="none" stroke="#5e5e5e" stroke-width="1.300"/><path d="M6.600 7.200l8.300 7.400M14.900 7.200l-8.300 7.400" stroke="#fdfdfd" stroke-width="3.600"/><path d="M6.600 7.200l8.300 7.400M14.900 7.200l-8.300 7.400" stroke="#d9532c" stroke-width="2.100"/></svg>
<svg style="left:281px;top:523px" width="16" height="16" viewBox="0 0 16 16"><rect x="2" y=".1" width="12.900" height="3" fill="#5e5e5e"/><path d="M2.500 .1v3.800M14.400 3v9.600h-3.200" fill="none" stroke="#5e5e5e" stroke-width="1.100"/><path d="M10.100 5.400h2.800M10.100 8.500h2.800" stroke="#8a8a8a" stroke-width="1"/><circle cx="3.900" cy="9" r="3.100" fill="#fdfdfd" stroke="#5e5e5e" stroke-width="1.300"/><path d="M6.300 11.300l3.200 3" stroke="#5e5e5e" stroke-width="2"/></svg>
<svg style="left:281px;top:546px" width="16" height="16" viewBox="0 0 16 16"><path d="M4 .6v13.800M7.800 .6v10M11.500 .6v5M.6 4h14M.6 7.800h9M.6 11.500h8" stroke="#d6d3d6" stroke-width="1"/><path d="M14.500 4.500V.600H.600V14.400h7" fill="none" stroke="#aaa7aa" stroke-width="1.200"/><path d="M10.500 10V8.600a2 2 0 0 1 4 0V10" fill="none" stroke="#cfcccf" stroke-width="1.400"/><rect x="9.200" y="10" width="6.600" height="5.900" fill="#cfcccf" stroke="#fdfdfd" stroke-width=".5"/><path d="M12.500 11.500v2.600" stroke="#fdfdfd" stroke-width="1"/></svg>
<div class="a" style="left:262px;top:653px;width:166px;height:48px;border:5px solid #ed1c24"></div>
<div class="a" style="left:0px;top:728px;width:1366px;height:40px;background:linear-gradient(90deg,#1b1c1e 0%,#1c1d20 45%,#1a202b 74%,#181b20 88%,#17181b 100%)"></div>
<div class="a" style="left:540px;top:728px;width:48px;height:40px;background:#47484a"></div>
<div class="a" style="left:348px;top:766px;width:40px;height:2px;background:#8fd050"></div>
<div class="a" style="left:397px;top:766px;width:40px;height:2px;background:#8fd050"></div>
<div class="a" style="left:446px;top:766px;width:40px;height:2px;background:#8fd050"></div>
<div class="a" style="left:495px;top:766px;width:40px;height:2px;background:#8fd050"></div>
<div class="a" style="left:540px;top:766px;width:48px;height:2px;background:#8fd050"></div>
<svg style="left:15.500px;top:739.500px" width="17" height="17" viewBox="0 0 17 17"><path d="M0 2.400l6.900-1v6.600H0zM7.800 1.300L17 0v8H7.800zM0 8.900h6.900v6.700l-6.900-1zM7.800 8.900H17V17l-9.200-1.300z" fill="#fff"/></svg>
<svg style="left:63.500px;top:740px" width="17" height="17" viewBox="0 0 17 17"><circle cx="10.500" cy="6.300" r="5.300" fill="none" stroke="#fff" stroke-width="1.300"/><path d="M6.800 10.200L.6 16.400" stroke="#fff" stroke-width="1.500"/></svg>
<svg style="left:112px;top:738.500px" width="22" height="19" viewBox="0 0 22 19"><path d="M0 1.500h8l1.500 1.800H22V18H0z" fill="#e8a825"/><path d="M0 4.500h22V18H0z" fill="#f8d66b"/><path d="M4.500 18v-5.500h13V18h-3.500v-3h-6v3z" fill="#3e8ede"/></svg>
<svg style="left:161.800px;top:737px" width="20" height="21" viewBox="0 0 20 21"><path d="M1 9.800C1.800 4 5.800 .5 10.500 .5c5.700 0 9.200 4 9.200 9.300v2.700H7.200c.2 3 2.600 4.600 5.600 4.600 2.200 0 4.200-.6 5.900-1.600v4C17 20.500 14.700 21 12.300 21 6.400 21 2.500 17.300 2.500 12c0-3 1.500-5.500 3.900-7C4 5.800 2.200 7.500 1 9.800zM7.300 8.700h7c0-2.500-1.400-4-3.500-4-2 0-3.200 1.500-3.500 4z" fill="#0b78d4"/></svg>
<svg style="left:209.500px;top:736.500px" width="23" height="23" viewBox="0 0 23 23"><rect x="9" y="5" width="13" height="12" fill="#0a64b8"/><path d="M10 6.300h11.200l-5.600 5z" fill="#fff"/><path d="M10 16.200V7.800l5.600 4.700 5.600-4.700v8.400z" fill="#fff" opacity=".95"/><path d="M0 2.200L13.500 0v23L0 20.500z" fill="#0f72c6"/><ellipse cx="6.800" cy="11.500" rx="3" ry="3.800" fill="none" stroke="#fff" stroke-width="1.700"/></svg>
<svg style="left:258px;top:739px" width="23" height="19" viewBox="0 0 23 19"><rect x="0" y="0" width="10.500" height="9.500" rx="1.500" fill="#eeeae6"/><rect x="12" y="0" width="10.500" height="9.500" rx="1.500" fill="#eeeae6"/><rect x="6" y="9.300" width="10.500" height="9.500" rx="1.500" fill="#e4dfda"/><text x="3.300" y="7" font-family="Liberation Sans, sans-serif" font-size="7.500" font-weight="bold" fill="#d11919">u</text><text x="16" y="7" font-family="Liberation Sans, sans-serif" font-size="7.500" font-weight="bold" fill="#d11919">i</text><text x="9" y="16" font-family="Liberation Sans, sans-serif" font-size="7.500" font-weight="bold" fill="#d11919">n</text></svg>
<svg style="left:307px;top:736px" width="24" height="24" viewBox="0 0 24 24"><rect x=".2" y=".1" width="23.500" height="23.600" rx="2" fill="#050505"/><path d="M3 10.100C7 9.700 10.600 7.600 14 3.400c0 2.100-.6 3.500-1.600 4.600 3.700-.6 7.300-.1 10.500 1.200-3.900 0-7.300.6-10.600 1.900C9.300 12.200 6 11.700 3 10.100z" fill="#e01f26"/><path d="M20.300 12.700c-2.900-.5-5.600-.2-7.700 1M8.400 11.600C5.400 13.100 4.900 16.700 7 18.900c2.500 2.500 7 2.100 9-.8 1.100-1.700 1-3.700-.1-5" fill="none" stroke="#e01f26" stroke-width="2.300" stroke-linecap="round"/><path d="M12.600 13.700c-2 .2-3 1.800-2.200 3 .8 1.100 2.600.8 2.800-.6" fill="none" stroke="#e01f26" stroke-width="1.500" stroke-linecap="round"/></svg>
<svg style="left:356px;top:737px" width="24" height="23" viewBox="0 0 24 23"><ellipse cx="11.500" cy="8.500" rx="11" ry="7.300" transform="rotate(-14 11.500 8.500)" fill="#f3f1f1" stroke="#c62d33" stroke-width="1.500"/><path d="M1.500 13c2.500 3 8 3.300 13 1.500" fill="none" stroke="#8d8d8d" stroke-width="2"/><path d="M7 4l9 12M16 3.500l-3.500 13" stroke="#8e9499" stroke-width="1.300"/><ellipse cx="15" cy="19" rx="2.300" ry="3" transform="rotate(-25 15 19)" fill="none" stroke="#2d8fd4" stroke-width="1.700"/><ellipse cx="20.500" cy="15.500" rx="2.300" ry="3" transform="rotate(60 20.500 15.500)" fill="none" stroke="#2d8fd4" stroke-width="1.700"/></svg>
<svg style="left:404.500px;top:736px" width="25" height="25" viewBox="0 0 25 25"><path d="M11 4C5 4 .3 7.800 .3 12.800c0 4.600 3.700 8.200 8.500 8.200 1.900 0 2.500-1.100 2.700-2.200.3-1.400 1.600-1.800 3.200-1.800 4.100 0 7.900-2 7.900-6 0-4-4.800-7-11.600-7z" fill="#c5e0f2" stroke="#9fc6df" stroke-width=".8"/><circle cx="4.800" cy="10.500" r="1.800" fill="#d8432f"/><circle cx="8.800" cy="7.300" r="1.800" fill="#4f9a3e"/><circle cx="13.500" cy="6.800" r="1.800" fill="#e7b52a"/><circle cx="10.500" cy="13.500" r="1.500" fill="#1c1d20"/><path d="M12 23.500L19.200 5.200l1.900.8L13.200 24z" fill="#d98a35"/><path d="M19 5.500l2.400-4.800 3 1.500-3.300 4.200z" fill="#e8c99b"/></svg>
<svg style="left:454.500px;top:737px" width="23" height="23" viewBox="0 0 23 23"><circle cx="11.500" cy="11.500" r="11.300" fill="#e33e2b"/><path d="M11.500 11.500L1.700 5.900A11.300 11.300 0 0 0 9 22.500z" fill="#2ca14d"/><path d="M11.500 11.500L9 22.500A11.300 11.300 0 0 0 21.300 5.900H11.500z" fill="#f9c513"/><path d="M11.500 11.500l9.800-5.600A11.300 11.300 0 0 0 1.700 5.900z" fill="#e33e2b"/><circle cx="11.500" cy="11.500" r="5.200" fill="#fff"/><circle cx="11.500" cy="11.500" r="4.100" fill="#4b8bf4"/></svg>
<svg style="left:503px;top:736px" width="24" height="24" viewBox="0 0 24 24"><path d="M8.500 .3h7a8 8 0 0 1 8 8v5.200a8 8 0 0 1-8 8h-4.500l-5.800 2c-.6.200-1-.2-.8-.7l1-2.900A8 8 0 0 1 .5 13.500V8.300a8 8 0 0 1 8-8z" fill="#1463ec"/><path d="M9.500 .3h6a8 8 0 0 1 8 8v5a8 8 0 0 1-8 8h-6a8 8 0 0 1-7.300-8V8.300a8 8 0 0 1 7.300-8z" fill="#fff"/><text x="4.500" y="14" font-family="Liberation Sans, sans-serif" font-size="8.600" font-weight="bold" fill="#2672f2" letter-spacing="-.3">Zalo</text></svg>
<svg style="left:552.500px;top:736.500px" width="23" height="23" viewBox="0 0 23 23"><rect x="11" y="3" width="11.500" height="17" fill="#fff" stroke="#1f7145" stroke-width="1"/><path d="M13 7.300h9M13 10.700h9M13 14.100h9M13 17.400h9M17.300 3.500v16" stroke="#1f7145" stroke-width="1.100"/><path d="M0 2.300L13.500 0v23L0 20.700z" fill="#1f7145"/><path d="M3.600 7l2.100-.1 1.300 3 1.400-3.200 2.100-.1-2.400 4.900 2.500 5-2.200-.1-1.500-3.400-1.400 3.200-2-.1 2.300-4.600z" fill="#fff"/></svg>
<svg style="left:1117px;top:744px" width="13" height="8" viewBox="0 0 13 8"><path d="M.7 7l5.800-5.800L12.300 7" fill="none" stroke="#fff" stroke-width="1.300"/></svg>
<svg style="left:1139px;top:742px" width="17" height="12" viewBox="0 0 17 12"><rect x="4.500" y="3.500" width="11" height="6.500" fill="none" stroke="#fff" stroke-width="1.100"/><rect x="15.800" y="5.300" width="1.200" height="3" fill="#fff"/><rect x="6" y="5" width="8" height="3.500" fill="#fff"/><path d="M2 0v2.500M4 0v2.500M.8 2.500h4.400v1.500a2.200 2.200 0 0 1-4.400 0zM3 6.200v3c0 1.300.8 1.800 2 1.800h2" fill="none" stroke="#fff" stroke-width="1"/></svg>
<svg style="left:1162.500px;top:741.500px" width="17" height="14" viewBox="0 0 17 14"><rect x="3.500" y="1.500" width="13" height="8.500" fill="none" stroke="#fff" stroke-width="1.100"/><path d="M10 10v2.500M6 13h8" stroke="#fff" stroke-width="1.100"/><rect x=".5" y="1.500" width="4.500" height="5" fill="#1a1b1e" stroke="#fff" stroke-width="1"/><path d="M2.700 6.500v6.500h3" fill="none" stroke="#fff" stroke-width="1"/><path d="M1.500 3.500h2.500" stroke="#fff" stroke-width=".8"/></svg>
<svg style="left:1186.500px;top:741.500px" width="17" height="14" viewBox="0 0 17 14"><path d="M.6 4.800h2.900l3.500-3.600v11.600L3.500 9.200H.6z" fill="none" stroke="#fff" stroke-width="1.100"/><path d="M9 4.500a3.500 3.500 0 0 1 0 5" fill="none" stroke="#fff" stroke-width="1.100"/><path d="M11 2.500a6 6 0 0 1 0 9" fill="none" stroke="#fff" stroke-width="1.100"/><path d="M13.300 .8a8.500 8.500 0 0 1 0 12.400" fill="none" stroke="#8a8a8a" stroke-width="1"/></svg>
<span class="tx" style="left:1213.50px;top:741.64px;font-size:12px;color:#fff;letter-spacing:-1.200px;">ENG</span>
<span class="tx" style="left:1255.00px;top:732.64px;font-size:12px;color:#fff;letter-spacing:-0.650px;">10:04 CH</span>
<span class="tx" style="left:1249.30px;top:750.84px;font-size:12px;color:#fff;letter-spacing:-0.256px;">23/03/2020</span>
<svg style="left:1325px;top:739.500px" width="17" height="17" viewBox="0 0 17 17"><path d="M.5 .5h16v12.500h-5l-3.500 3.500V13H.5z" fill="#fff"/><path d="M3 3.800h11M3 6.300h11M3 8.800h7" stroke="#1a1b1e" stroke-width="1.100"/><circle cx="13.500" cy="12.500" r="3" fill="#1a1b1e" stroke="#fff" stroke-width=".9"/><path d="M12 12.500l1.200 1.200 1.800-2.200" fill="none" stroke="#fff" stroke-width=".8"/></svg>
<div class="a" style="left:1361px;top:728px;width:1px;height:40px;background:#55585c"></div>
</div>
</body>
</html>
